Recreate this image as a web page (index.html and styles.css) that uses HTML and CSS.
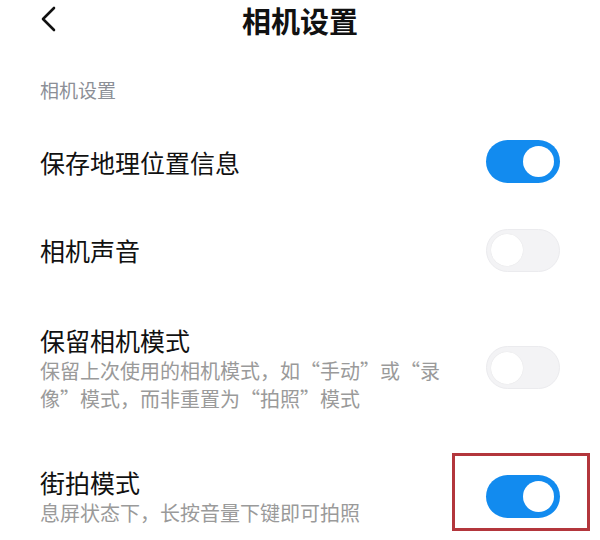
FILE: index.html
```html
<!DOCTYPE html>
<html lang="zh-CN">
<head>
<meta charset="utf-8">
<link rel="stylesheet" href="styles.css">
</head>
<body>
<div class="page">
  <header class="header">
    <svg class="back" width="20" height="26" viewBox="0 0 20 26"><polyline points="15,2 4,13 15,24" fill="none" stroke="#111" stroke-width="2.6" stroke-linecap="round" stroke-linejoin="round"/></svg>
    <h1 class="title">相机设置</h1>
  </header>
  <div class="section-label">相机设置</div>

  <div class="row row-1">
    <div class="text"><div class="name">保存地理位置信息</div></div>
    <div class="toggle on"><span class="knob"></span></div>
  </div>
  <div class="row row-2">
    <div class="text"><div class="name">相机声音</div></div>
    <div class="toggle off"><span class="knob"></span></div>
  </div>
  <div class="row row-3">
    <div class="text">
      <div class="name">保留相机模式</div>
      <div class="desc">保留上次使用的相机模式，如“手动”或“录像”模式，而非重置为“拍照”模式</div>
    </div>
    <div class="toggle off"><span class="knob"></span></div>
  </div>
  <div class="row row-4">
    <div class="text">
      <div class="name">街拍模式</div>
      <div class="desc">息屏状态下，长按音量下键即可拍照</div>
    </div>
    <div class="toggle on"><span class="knob"></span></div>
    <div class="highlight"></div>
  </div>
</div>
</body>
</html>
```

FILE: styles.css
```css
* { box-sizing: border-box; }
html, body { margin: 0; padding: 0; background: #fff; }
body {
  font-family: "Noto Sans CJK SC", "Noto Sans", sans-serif;
  color: #111;
  width: 600px;
  height: 540px;
  overflow: hidden;
}
.page { position: relative; }
.header {
  position: relative;
  height: 37px;
  padding-top: 3px;
  display: flex;
  align-items: center;
  justify-content: center;
}
.back {
  position: absolute;
  left: 39px;
  top: 6px;
}
.title {
  margin: 0;
  font-size: 29px;
  line-height: 31px;
  font-weight: 700;
  letter-spacing: 0;
}
.section-label {
  padding: 40px 40px 0;
  font-size: 19px;
  line-height: 26px;
  color: #8c8f97;
}
.row {
  position: relative;
  display: flex;
  align-items: center;
  justify-content: space-between;
  padding: 0 40px;
}
.row-1 { margin-top: 15px; height: 87px; }
.row-2 { height: 90px; }
.row-3 { height: 145px; }
.row-4 { height: 112px; }
.text { width: 410px; }
.name {
  font-size: 25px;
  line-height: 34px;
  color: #111;
}
.desc {
  font-size: 20px;
  line-height: 28px;
  color: #9a9a9a;
}
.toggle {
  position: relative;
  width: 74px;
  height: 43px;
  border-radius: 22px;
  flex: none;
}
.toggle.on { background: #128bef; }
.toggle.off { background: #f3f3f5; border: 1px solid #ebebee; }
.knob {
  position: absolute;
  top: 50%;
  width: 31px;
  height: 31px;
  margin-top: -15.5px;
  border-radius: 50%;
  background: #fff;
}
.toggle.on .knob { right: 6px; }
.toggle.off .knob { left: 4px; width: 32px; height: 32px; margin-top: -16px; box-shadow: 0 0 1px rgba(0,0,0,0.12); }
.highlight {
  position: absolute;
  left: 452px;
  top: 13px;
  width: 138px;
  height: 78px;
  border: 3px solid #b3363c;
}
```
